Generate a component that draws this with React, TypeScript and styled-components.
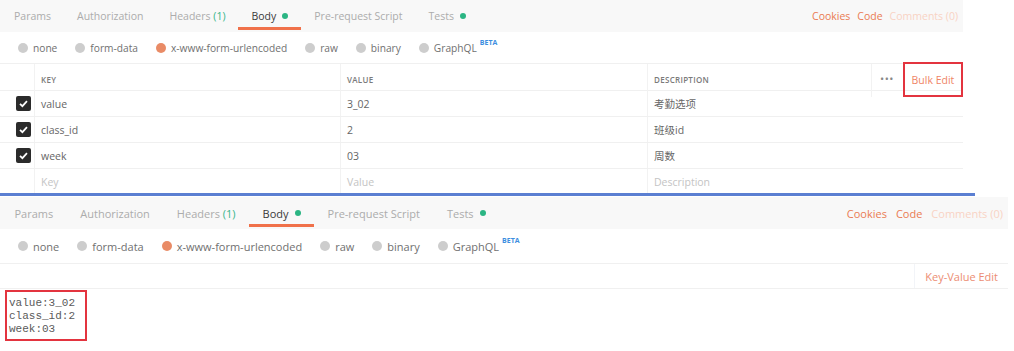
import React from "react";
import styled, { createGlobalStyle } from "styled-components";

const GlobalStyle = createGlobalStyle`
  body {
    margin: 0;
    background: #ffffff;
    font-family: "Open Sans", "Noto Sans CJK SC", sans-serif;
  }
`;

const Page = styled.div`
  display: flex;
  flex-direction: column;
  width: 1014px;
  height: 351px;
  overflow: hidden;
  background: #fff;
`;

const Panel = styled.section<{ $width: number; $font: number; $height?: number }>`
  width: ${(p) => p.$width}px;
  font-size: ${(p) => p.$font}px;
  height: ${(p) => (p.$height ? `${p.$height}px` : "auto")};
  overflow: hidden;
  flex-shrink: 0;
`;

const TabBar = styled.div`
  display: flex;
  align-items: flex-start;
  height: 32px;
  background: #f8f8f8;
  padding-left: 1px;
  box-sizing: border-box;
`;

const Tab = styled.div<{ $active?: boolean; $pad: number }>`
  display: flex;
  align-items: center;
  gap: 6px;
  height: 30px;
  box-sizing: border-box;
  padding: 5px ${(p) => p.$pad}px 0;
  border-bottom: 3px solid ${(p) => (p.$active ? "#f0714a" : "transparent")};
  color: ${(p) => (p.$active ? "#3a3a3a" : "#acacac")};
  white-space: nowrap;
`;

const Count = styled.span`
  color: #36b58a;
`;

const Dot = styled.span`
  width: 6px;
  height: 6px;
  border-radius: 50%;
  background: #2bb583;
`;

const Links = styled.div<{ $gap: number }>`
  display: flex;
  align-items: center;
  gap: ${(p) => p.$gap}px;
  height: 32px;
  margin-left: auto;
  padding-right: 5px;
`;

const Link = styled.span<{ $muted?: boolean }>`
  color: ${(p) => (p.$muted ? "#f8d3c4" : "#ea7b52")};
  white-space: nowrap;
`;

const RadioRow = styled.div<{ $height: number; $font: number }>`
  display: flex;
  align-items: center;
  gap: 18px;
  height: ${(p) => p.$height}px;
  padding-left: 18px;
  border-bottom: 1px solid #f0f0f0;
  color: #707070;
  font-size: ${(p) => p.$font}px;
`;

const Radio = styled.label`
  display: flex;
  align-items: center;
  gap: 5px;
  white-space: nowrap;
`;

const RadioDot = styled.span<{ $checked?: boolean }>`
  width: 10px;
  height: 10px;
  border-radius: 50%;
  background: ${(p) => (p.$checked ? "#e98b66" : "#cdcdcd")};
`;

const Beta = styled.sup`
  align-self: flex-start;
  margin: -3px 0 0 -2px;
  font-size: 7px;
  font-weight: 700;
  color: #3d8ee0;
`;

const Row = styled.div<{ $header?: boolean }>`
  display: grid;
  grid-template-columns: ${(p) =>
    p.$header ? "35px 306px 307px 224px 91px" : "35px 306px 307px 315px"};
  height: ${(p) => (p.$header ? 27 : 26)}px;
  border-bottom: 1px solid #f0f0f0;
  box-sizing: border-box;
`;

const Cell = styled.div<{ $muted?: boolean; $last?: boolean }>`
  display: flex;
  align-items: center;
  padding-left: 6px;
  border-right: ${(p) => (p.$last ? "none" : "1px solid #f2f2f2")};
  color: ${(p) => (p.$muted ? "#c4c4c4" : "#666")};
  white-space: nowrap;
`;

const HeadCell = styled(Cell)`
  padding-bottom: 3px;
  font-size: 8px;
  font-weight: 600;
  letter-spacing: 0.3px;
  color: #7a7a7a;
`;

const CheckCell = styled.div`
  display: flex;
  align-items: center;
  justify-content: flex-end;
  padding-right: 3px;
  border-right: 1px solid #f2f2f2;
`;

const CheckBox = styled.span`
  display: flex;
  align-items: center;
  justify-content: center;
  width: 15px;
  height: 15px;
  border-radius: 2px;
  background: #2b2b2b;
`;

const Actions = styled.div`
  display: flex;
  align-items: flex-start;
  padding-left: 8px;
`;

const More = styled.span`
  margin-top: 9px;
  color: #888;
  font-size: 11px;
  letter-spacing: 0.5px;
  line-height: 12px;
`;

const BulkEdit = styled.span`
  position: relative;
  z-index: 1;
  display: flex;
  align-items: center;
  justify-content: center;
  width: 61px;
  height: 35px;
  margin: -2px 0 0 9px;
  box-sizing: border-box;
  border: 2px solid #e3343f;
  color: #ef8566;
  font-size: 10.5px;
`;

const BlueRule = styled.div`
  width: 975px;
  height: 3px;
  margin-bottom: 1px;
  background: #5b7fd2;
  flex-shrink: 0;
`;

const BulkBar = styled.div`
  display: flex;
  justify-content: flex-end;
  height: 24px;
  border-top: 1px solid #f0f0f0;
  border-bottom: 1px solid #f0f0f0;
  margin-top: -1px;
`;

const KeyValueEdit = styled.span`
  display: flex;
  align-items: center;
  padding: 0 10px;
  border-left: 1px solid #f2f4f8;
  color: #ec8d73;
`;

const Editor = styled.pre`
  align-self: flex-start;
  margin: 1px 0 0 5px;
  padding: 5px 10px 3px 2px;
  border: 2px solid #e3343f;
  font-family: "Liberation Mono", "Courier New", monospace;
  font-size: 11px;
  line-height: 13px;
  color: #5a5a5a;
`;

const tabs = (pad: number, linkGap: number) => (
  <TabBar>
    <Tab $pad={pad}>Params</Tab>
    <Tab $pad={pad}>Authorization</Tab>
    <Tab $pad={pad}>
      <span>
        Headers <Count>(1)</Count>
      </span>
    </Tab>
    <Tab $pad={pad} $active>
      Body <Dot />
    </Tab>
    <Tab $pad={pad}>Pre-request Script</Tab>
    <Tab $pad={pad}>
      Tests <Dot />
    </Tab>
    <Links $gap={linkGap}>
      <Link>Cookies</Link>
      <Link>Code</Link>
      <Link $muted>Comments (0)</Link>
    </Links>
  </TabBar>
);

const radios = ["none", "form-data", "x-www-form-urlencoded", "raw", "binary", "GraphQL"];

const bodyTypes = (height: number, font: number) => (
  <RadioRow $height={height} $font={font}>
    {radios.map((r) => (
      <Radio key={r}>
        <RadioDot $checked={r === "x-www-form-urlencoded"} />
        {r}
        {r === "GraphQL" && <Beta>BETA</Beta>}
      </Radio>
    ))}
  </RadioRow>
);

const params = [
  { key: "value", value: "3_02", description: "考勤选项" },
  { key: "class_id", value: "2", description: "班级id" },
  { key: "week", value: "03", description: "周数" },
];

const Check = () => (
  <CheckBox>
    <svg width="11" height="11" viewBox="0 0 12 12">
      <path d="M2.2 6.3l2.6 2.6 5-5.4" fill="none" stroke="#fff" strokeWidth="1.9" />
    </svg>
  </CheckBox>
);

export default function App() {
  return (
    <Page>
      <GlobalStyle />
      <Panel $width={963} $font={10.5} $height={193}>
        {tabs(13, 7)}
        {bodyTypes(31, 10.2)}
        <Row $header>
          <Cell />
          <HeadCell>KEY</HeadCell>
          <HeadCell>VALUE</HeadCell>
          <HeadCell>DESCRIPTION</HeadCell>
          <Actions>
            <More>•••</More>
            <BulkEdit>Bulk Edit</BulkEdit>
          </Actions>
        </Row>
        {params.map((p) => (
          <Row key={p.key}>
            <CheckCell>
              <Check />
            </CheckCell>
            <Cell>{p.key}</Cell>
            <Cell>{p.value}</Cell>
            <Cell $last>{p.description}</Cell>
          </Row>
        ))}
        <Row>
          <CheckCell />
          <Cell $muted>Key</Cell>
          <Cell $muted>Value</Cell>
          <Cell $muted $last>
            Description
          </Cell>
        </Row>
      </Panel>
      <BlueRule />
      <Panel $width={1008} $font={11}>
        {tabs(13.5, 9)}
        {bodyTypes(34, 11)}
        <BulkBar>
          <KeyValueEdit>Key-Value Edit</KeyValueEdit>
        </BulkBar>
      </Panel>
      <Editor>{"value:3_02\nclass_id:2\nweek:03"}</Editor>
    </Page>
  );
}
